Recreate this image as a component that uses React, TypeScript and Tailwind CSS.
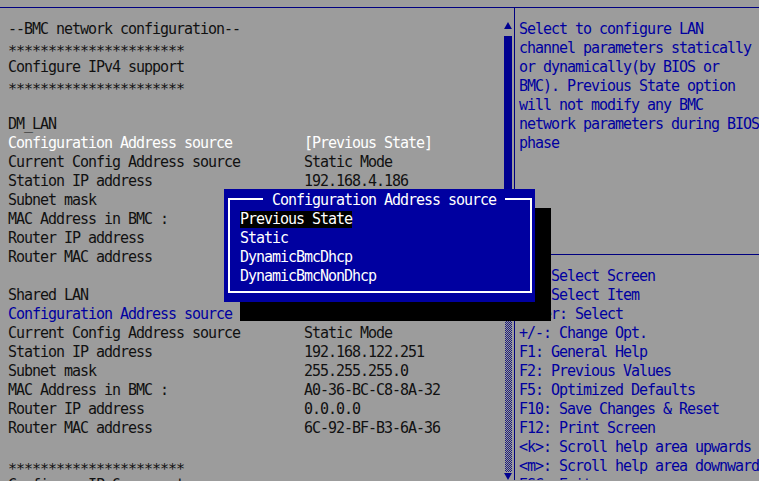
const STARS = '∗∗∗∗∗∗∗∗∗∗∗∗∗∗∗∗∗∗∗∗∗∗';

type Row = { label: string; value?: string; tone?: 'white' | 'blue' };

const leftRows: Row[] = [
  { label: '--BMC network configuration--' },
  { label: STARS },
  { label: 'Configure IPv4 support' },
  { label: STARS },
  { label: '' },
  { label: 'DM_LAN' },
  { label: 'Configuration Address source', value: '[Previous State]', tone: 'white' },
  { label: 'Current Config Address source', value: 'Static Mode' },
  { label: 'Station IP address', value: '192.168.4.186' },
  { label: 'Subnet mask', value: '255.255.255.0' },
  { label: 'MAC Address in BMC :', value: 'A0-36-BC-C8-8A-31' },
  { label: 'Router IP address', value: '0.0.0.0' },
  { label: 'Router MAC address', value: '6C-92-BF-B3-6A-35' },
  { label: '' },
  { label: 'Shared LAN' },
  { label: 'Configuration Address source', tone: 'blue' },
  { label: 'Current Config Address source', value: 'Static Mode' },
  { label: 'Station IP address', value: '192.168.122.251' },
  { label: 'Subnet mask', value: '255.255.255.0' },
  { label: 'MAC Address in BMC :', value: 'A0-36-BC-C8-8A-32' },
  { label: 'Router IP address', value: '0.0.0.0' },
  { label: 'Router MAC address', value: '6C-92-BF-B3-6A-36' },
  { label: '' },
  { label: STARS },
  { label: 'Configure IPv6 support' },
];

const helpText = [
  'Select to configure LAN',
  'channel parameters statically',
  'or dynamically(by BIOS or',
  'BMC). Previous State option',
  'will not modify any BMC',
  'network parameters during BIOS',
  'phase',
  '',
  '',
  '',
  '',
  '',
];

const keyHelp = [
  '→←: Select Screen',
  '↑↓: Select Item',
  'Enter: Select',
  '+/-: Change Opt.',
  'F1: General Help',
  'F2: Previous Values',
  'F5: Optimized Defaults',
  'F10: Save Changes & Reset',
  'F12: Print Screen',
  '<k>: Scroll help area upwards',
  '<m>: Scroll help area downwards',
  'ESC: Exit',
];

const options = ['Previous State', 'Static', 'DynamicBmcDhcp', 'DynamicBmcNonDhcp'];

const Scrollbar = () => (
  <div className="flex w-[8px] shrink-0 flex-col pt-[14px]">
    <svg width="8" height="7" viewBox="0 0 8 7">
      <path d="M4 0 L8 7 L0 7 Z" fill="#000090" />
    </svg>
    <div className="mt-[7px] h-[253px] bg-[#000090]" />
    <div className="ml-[1px] h-[187px] bg-[repeating-conic-gradient(#1a1a80_0%_25%,transparent_0%_50%)] bg-[length:2px_2px]" />
    <svg width="8" height="7" viewBox="0 0 8 7" className="mt-[1px]">
      <path d="M0 0 L8 0 L4 7 Z" fill="#000090" />
    </svg>
  </div>
);

const Popup = () => (
  <div className="absolute left-[224px] top-[189px] h-[113px] w-[311px] bg-[#0000a0] pl-[4px] pt-[9px] text-white shadow-[16px_19px_0_0_#000]">
    <div className="relative h-[95px] w-[304px] border-2 border-white pl-[10px] pt-[10px]">
      <span className="absolute -top-[9px] left-[33px] h-[19px] bg-[#0000a0] px-[9px] leading-[19px]">
        Configuration Address source
      </span>
      {options.map((o, i) => (
        <div key={o} className="flex h-[19px] items-center whitespace-pre">
          <span className={i === 0 ? 'h-[17px] bg-black leading-[17px]' : 'leading-[19px]'}>{o}</span>
        </div>
      ))}
    </div>
  </div>
);

export default function App() {
  return (
    <div className="relative h-[481px] w-[759px] overflow-hidden bg-[#9c9c9c] font-['DejaVu_Sans_Mono','Liberation_Mono',monospace] text-[15px] tracking-[-1.03px] text-[#111]">
      <div className="h-[8px] border-b border-[#000080]" />
      <div className="flex h-[472px]">
        <div className="flex w-[515px] shrink-0 border-r border-[#000080]">
          <div className="flex-1 pl-[8px] pt-[12px]">
            {leftRows.map((r, i) => (
              <div
                key={i}
                className={
                  'flex h-[19px] items-center whitespace-pre leading-[19px] ' +
                  (r.tone === 'white' ? 'text-white' : r.tone === 'blue' ? 'text-[#0000a0]' : '')
                }
              >
                <span className="w-[296px] shrink-0">{r.label}</span>
                {r.value && <span>{r.value}</span>}
              </div>
            ))}
          </div>
          <Scrollbar />
          <div className="w-[2px]" />
        </div>
        <div className="flex-1 overflow-hidden pt-[12px] text-[#0000a0]">
          {helpText.map((t, i) => (
            <div key={i} className="h-[19px] whitespace-pre pl-[4px] leading-[19px]">
              {t}
            </div>
          ))}
          <div className="flex h-[19px] items-start pt-[6px]">
            <div className="h-px w-full bg-[#000080]" />
          </div>
          {keyHelp.map((t) => (
            <div key={t} className="h-[19px] whitespace-pre pl-[4px] leading-[19px]">
              {t}
            </div>
          ))}
        </div>
      </div>
      <Popup />
    </div>
  );
}
